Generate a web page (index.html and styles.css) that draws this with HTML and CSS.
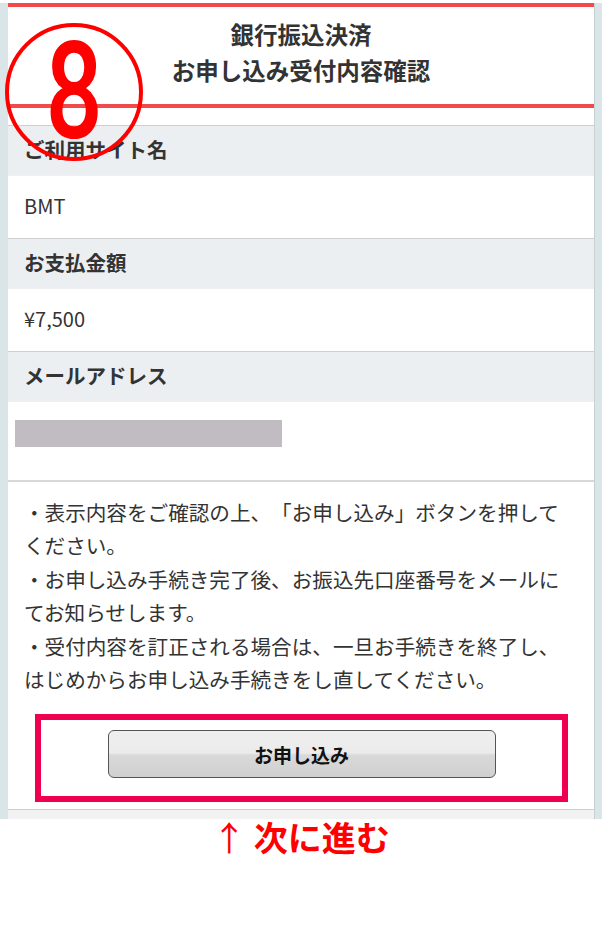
FILE: index.html
```html
<!DOCTYPE html>
<html lang="ja">
<head>
<meta charset="utf-8">
<link rel="stylesheet" href="styles.css">
</head>
<body>
<div class="page">
  <div class="frame">
    <div class="panel">
      <div class="header">
        <div class="title">銀行振込決済<br>お申し込み受付内容確認</div>
      </div>
      <div class="rows">
        <div class="label">ご利用サイト名</div>
        <div class="value">BMT</div>
        <div class="label">お支払金額</div>
        <div class="value">¥7,500</div>
        <div class="label">メールアドレス</div>
        <div class="value value-mail"><span class="mask"></span></div>
      </div>
      <div class="notes">
        <p>・表示内容をご確認の上、「お申し込み」ボタンを押してください。</p>
        <p>・お申し込み手続き完了後、お振込先口座番号をメールにてお知らせします。</p>
        <p>・受付内容を訂正される場合は、一旦お手続きを終了し、はじめからお申し込み手続きをし直してください。</p>
      </div>
      <div class="highlight">
        <button class="submit" type="button">お申し込み</button>
      </div>
      <div class="footer"></div>
      <div class="step">
        <svg width="142" height="142" viewBox="0 0 142 142"><circle cx="71" cy="71" r="67" fill="none" stroke="#ff0000" stroke-width="4"/></svg>
        <span class="step-num">8</span>
      </div>
    </div>
  </div>
  <div class="next"><span class="arrow">↑</span> 次に進む</div>
</div>
</body>
</html>
```
FILE: styles.css
```css
* { box-sizing: border-box; }
html, body { margin: 0; padding: 0; background: #fff; }
body {
  font-family: "Noto Sans CJK JP", "Noto Sans", sans-serif;
  color: #333;
  text-spacing-trim: space-all;
}
.page { width: 602px; }
.frame {
  background: #d9e5e7;
  padding: 0 7px 0 8px;
}
.panel {
  position: relative;
  background: #fff;
  border-right: 1px solid #c8d0d2;
}
.header {
  margin-top: 3px;
  border-top: 4px solid #f14a4a;
  border-bottom: 4px solid #f14a4a;
  padding: 9px 0 16px;
  text-align: center;
}
.title {
  font-size: 23.5px;
  font-weight: bold;
  line-height: 36px;
  color: #333;
}
.rows { margin-top: 17px; }
.label {
  border-top: 1px solid #cfcfcf;
  background: #ebeff2;
  height: 50px;
  padding-left: 16px;
  font-size: 20.5px;
  font-weight: bold;
  line-height: 47px;
}
.value {
  height: 63px;
  padding-left: 16px;
  font-size: 20px;
  line-height: 59px;
  border-top: 1px solid #eef0f2;
}
.value-mail {
  height: 79px;
  padding: 18px 0 0 7px;
  line-height: 1;
}
.mask {
  display: block;
  width: 267px;
  height: 27px;
  background: #c1bcc2;
}
.notes {
  border-top: 2px solid #d8d8d8;
  padding: 14px 20px 0 16px;
  font-size: 20.6px;
  line-height: 33.4px;
  text-spacing-trim: space-all;
}
.notes p { margin: 0; }
.highlight {
  margin: 18px 26px 0 27px;
  border: 6px solid #ef0050;
  height: 88px;
  display: flex;
  justify-content: center;
  padding-top: 10px;
}
.submit {
  width: 388px;
  height: 48px;
  border: 1px solid #555;
  border-radius: 6px;
  background: linear-gradient(#efefef 0%, #ebebeb 48%, #d9d9d9 52%, #d0d0d0 100%);
  font-family: "Noto Sans CJK JP", sans-serif;
  font-size: 19px;
  font-weight: bold;
  color: #111;
  padding: 0;
}
.footer {
  margin-top: 7px;
  border-top: 1px solid #cfcfcf;
  background: #f2f2f2;
  height: 10px;
}
.step {
  position: absolute;
  left: -5px;
  top: 18px;
  width: 142px;
  height: 142px;
}
.step svg { display: block; }
.step-num {
  position: absolute;
  left: 0;
  top: 3px;
  width: 142px;
  text-align: center;
  font-family: "Roboto", "Liberation Sans", sans-serif;
  font-weight: 500;
  font-size: 136px;
  line-height: 136px;
  color: #ff0000;
  transform: scaleX(0.74);
}
.next {
  text-align: center;
  color: #ff0000;
  font-size: 34px;
  font-weight: bold;
  line-height: 36px;
  padding-top: 0;
}
.arrow { font-weight: normal; }
```
